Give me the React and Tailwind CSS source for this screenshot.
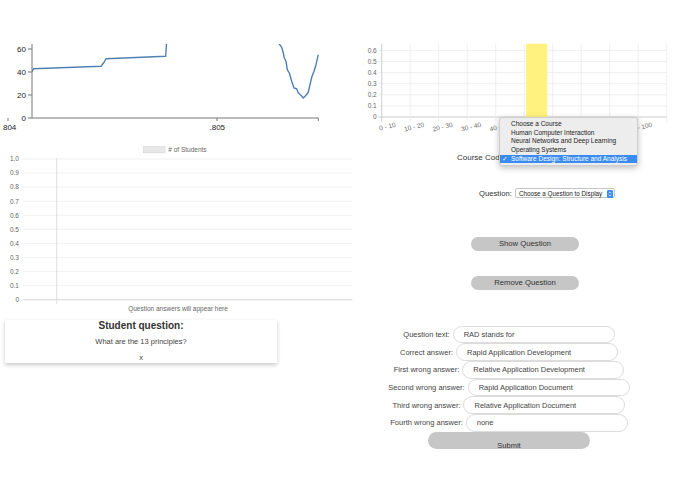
import React from 'react';

const FONT = 'Liberation Sans, Arial, sans-serif';

// line chart points, page coordinates (read off the picture)
const leftLine = [[32, 72], [33.3, 68.7], [101, 66.3], [102.7, 64], [104.3, 62], [106, 58.7], [165.7, 56.3], [166.7, 40]];
const rightLine = [
  [278.5, 40], [279.3, 44], [281.7, 47.3], [283.3, 53], [284.3, 58], [286, 61.3], [287.3, 69.7],
  [289.3, 73], [291.7, 81.3], [294, 88], [296.7, 88.7], [298.3, 93], [301, 95.3], [303.3, 98],
  [306, 95.3], [308.3, 92], [310, 84.7], [311.7, 77.3], [314, 71.3], [316, 64.7], [318.3, 54.7],
];
const toPath = (pts) => pts.map((p, i) => `${i ? 'L' : 'M'}${p[0]} ${p[1]}`).join(' ');

const courses = [
  'Choose a Course',
  'Human Computer Interaction',
  'Neural Networks and Deep Learning',
  'Operating Systems',
  'Software Design: Structure and Analysis',
];

const formRows = [
  ['Question text:', 'RAD stands for'],
  ['Correct answer:', 'Rapid Application Development'],
  ['First wrong answer:', 'Relative Application Development'],
  ['Second wrong answer:', 'Rapid Application Document'],
  ['Third wrong answer:', 'Relative Application Document'],
  ['Fourth wrong answer:', 'none'],
];

const TimeLineChart = () => {
  const yTicks = [0, 20, 40, 60];
  return (
    <svg width="348" height="140" className="block" fontFamily={FONT}>
      <defs>
        <clipPath id="plotClip">
          <rect x="32" y="44" width="290" height="80" />
        </clipPath>
        <clipPath id="leftClip">
          <rect x="3" y="0" width="345" height="140" />
        </clipPath>
      </defs>
      {/* y axis */}
      <line x1="32" y1="44" x2="32" y2="118" stroke="#777" />
      {yTicks.map((v) => {
        const y = 118 - v * 1.15;
        return (
          <g key={v}>
            <line x1="28" y1={y} x2="32" y2={y} stroke="#777" />
            <text x="26" y={y + 2.8} fontSize="8" textAnchor="end" fill="#222">{v}</text>
          </g>
        );
      })}
      {/* x axis */}
      <line x1="32" y1="118" x2="318.3" y2="118" stroke="#777" />
      <line x1="8" y1="118" x2="8" y2="121" stroke="#777" />
      <line x1="217" y1="118" x2="217" y2="121" stroke="#777" />
      <line x1="318.3" y1="118" x2="318.3" y2="121" stroke="#777" />
      <g clipPath="url(#leftClip)">
        <text x="8.5" y="129.5" fontSize="8" textAnchor="middle" fill="#222">.804</text>
      </g>
      <text x="217.3" y="129.5" fontSize="8" textAnchor="middle" fill="#222">.805</text>
      <g clipPath="url(#plotClip)" fill="none" stroke="#4f80b3" strokeWidth="1.4" strokeLinejoin="round">
        <path d={toPath(leftLine)} />
        <path d={toPath(rightLine)} />
      </g>
    </svg>
  );
};

const AnswersChart = () => {
  const steps = Array.from({ length: 11 }, (_, i) => i);
  return (
    <svg width="348" height="176" viewBox="0 140 348 176" className="block overflow-visible" fontFamily={FONT}>
      <rect x="143.3" y="146.7" width="21.7" height="6" fill="#e8e8e8" stroke="#d6d6d6" strokeWidth="0.7" />
      <text x="168.3" y="152.3" fontSize="6.5" fill="#666">{'# of Students'}</text>
      {steps.map((i) => {
        const y = 299.7 - i * 14.07;
        return (
          <g key={i}>
            <line x1="22.7" y1={y} x2="352.3" y2={y} stroke={i === 0 ? '#c9c9c9' : '#eeeeee'} strokeWidth="0.8" />
            <text x="19" y={y + 2.3} fontSize="6.5" textAnchor="end" fill="#666">
              {i === 0 ? '0' : i === 10 ? '1.0' : `0.${i}`}
            </text>
          </g>
        );
      })}
      <line x1="56.7" y1="158" x2="56.7" y2="304" stroke="#d6d6d6" strokeWidth="0.8" />
      <text x="178" y="311.3" fontSize="6.5" textAnchor="middle" fill="#666">Question answers will appear here</text>
    </svg>
  );
};

const GradesChart = () => {
  const bins = ['0 - 10', '10 - 20', '20 - 30', '30 - 40', '40 - 50', '50 - 60', '60 - 70', '70 - 80', '80 - 90', '90 - 100'];
  const levels = [0, 1, 2, 3, 4, 5, 6];
  return (
    <svg width="322" height="152" viewBox="348 0 322 152" className="block" fontFamily={FONT}>
      {levels.map((i) => {
        const y = 117 - i * 11.1;
        return (
          <g key={i}>
            <line x1="378" y1={y} x2="667" y2={y} stroke={i === 0 ? '#c2c2c2' : '#ebebeb'} strokeWidth="0.8" />
            <text x="376.7" y={y + 2.3} fontSize="6.5" textAnchor="end" fill="#666">
              {i === 0 ? '0' : `0.${i}`}
            </text>
          </g>
        );
      })}
      {Array.from({ length: 11 }, (_, i) => (
        <line
          key={i}
          x1={381.7 + i * 28.5}
          y1="43.7"
          x2={381.7 + i * 28.5}
          y2="121.5"
          stroke={i === 0 ? '#c2c2c2' : '#ebebeb'}
          strokeWidth="0.8"
        />
      ))}
      <rect x="526" y="43.7" width="21.3" height="73.3" fill="#fff27f" />
      {bins.map((b, i) => {
        const cx = 381.7 + 28.5 * (i + 0.5);
        return (
          <text key={b} x={cx} y="126.5" fontSize="6.5" textAnchor="end" fill="#666" transform={`rotate(-14 ${cx} 126.5)`}>
            {b}
          </text>
        );
      })}
    </svg>
  );
};

const CourseMenu = () => (
  <div className="absolute left-[151px] top-[116.7px] w-[139px] pt-[2.3px] pb-[2px] bg-[#ededed] border border-[#cdcdcd] rounded-[3px] shadow-[0_2px_6px_rgba(0,0,0,0.25)] font-['Liberation_Sans',Arial,sans-serif]">
    {courses.map((c, i) => {
      const selected = i === courses.length - 1;
      return (
        <div
          key={c}
          className={`relative h-[8.7px] leading-[8.7px] text-[6.5px] pl-[11px] whitespace-nowrap ${
            selected ? 'bg-[#3b8cf2] text-white' : 'text-[#222]'
          }`}
        >
          {selected && (
            <span className="absolute left-[2px] top-0 text-[6.5px] font-['DejaVu_Sans',sans-serif]">✓</span>
          )}
          {c}
        </div>
      );
    })}
  </div>
);

const App = () => {
  return (
    <div className="w-[695px] h-[494px] bg-white flex overflow-hidden font-['Liberation_Sans',Arial,sans-serif]">
      {/* Left column */}
      <div className="w-[348px] shrink-0 flex flex-col">
        <TimeLineChart />
        <AnswersChart />
        <div className="ml-[5px] mt-[4px] w-[272px] bg-white shadow-[0_2px_4px_rgba(0,0,0,0.22)] flex flex-col items-center">
          <div className="h-[12px] leading-[12px] text-[10px] font-bold text-[#333]">Student question:</div>
          <div className="mt-[5px] h-[10px] leading-[10px] text-[7.5px] text-[#444]">What are the 13 principles?</div>
          <div className="mt-[5.7px] h-[10px] leading-[10px] text-[7.5px] text-[#444]">x</div>
        </div>
      </div>

      {/* Right column */}
      <div className="relative w-[322px] shrink-0 flex flex-col">
        <GradesChart />
        <CourseMenu />
        <div className="ml-[109px] h-[11px] leading-[11px] text-[8px] text-[#333]">Course Code:</div>

        <div className="ml-[131px] mt-[25.3px] h-[10px] flex items-center gap-[3px]">
          <span className="text-[7.7px] text-[#333]">Question:</span>
          <div className="relative w-[100px] h-[10px] bg-white border border-[#c4c4c4] rounded-[2px] flex items-center pl-[3px]">
            <span className="text-[6.3px] font-medium text-[#222] whitespace-nowrap">Choose a Question to Display</span>
            <svg className="absolute right-[1px] top-[0.3px]" width="6" height="8" viewBox="0 0 6 8">
              <rect width="6" height="8" rx="1.3" fill="#3b8cf2" />
              <path d="M1.7 3.2 L3 1.9 L4.3 3.2 M1.7 4.8 L3 6.1 L4.3 4.8" stroke="#fff" strokeWidth="0.7" fill="none" />
            </svg>
          </div>
        </div>

        <button className="ml-[123px] mt-[38.4px] w-[108px] h-[14px] rounded-full bg-[#c6c6c6] text-[7.7px] text-[#333] leading-[14px]">
          Show Question
        </button>
        <button className="ml-[123px] mt-[25.3px] w-[108px] h-[14px] rounded-full bg-[#c6c6c6] text-[7.7px] text-[#333] leading-[14px]">
          Remove Question
        </button>

        <div className="mt-[35.7px] flex flex-col">
          {formRows.map(([label, value]) => (
            <div key={label} className="h-[17.7px] flex items-center justify-center gap-[3px]">
              <span className="text-[7.5px] text-[#444] whitespace-nowrap">{label}</span>
              <input
                readOnly
                value={value}
                className="w-[162px] h-[17.7px] pl-[10px] bg-white border border-[#dcdcdc] rounded-full text-[7.5px] text-[#444] outline-none"
              />
            </div>
          ))}
        </div>
        <button className="mx-auto w-[162px] h-[17.7px] rounded-full bg-[#c6c6c6] text-[7.5px] text-[#333] pt-[10px] leading-[8px]">
          Submit
        </button>
      </div>
    </div>
  );
};

export default App;
